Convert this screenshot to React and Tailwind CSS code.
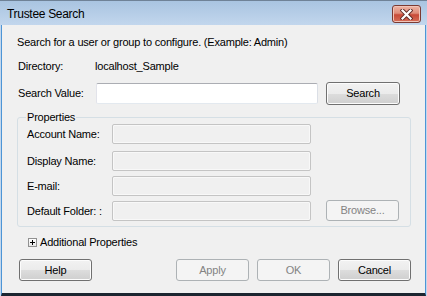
import React from "react";

function Btn({ children, disabled, className = "" }) {
  return (
    <div
      className={
        "flex items-center justify-center rounded-[3px] border text-[11px] leading-none " +
        (disabled
          ? "border-[#adb2b5] bg-[#f4f4f4] text-[#838383] "
          : "border-[#707070] bg-[linear-gradient(#f2f2f2_0%,#ebebeb_50%,#dddddd_50%,#cfcfcf_100%)] text-black shadow-[inset_0_0_0_1px_#fcfcfc] ") +
        className
      }
    >
      {children}
    </div>
  );
}

function DisabledInput({ className = "" }) {
  return (
    <div
      className={
        "rounded-[2px] border border-[#c4c4c4] bg-[#f0f0f0] shadow-[inset_0_0_0_1px_#f8f8f8] " +
        className
      }
    />
  );
}

function PropRow({ label, className = "", children }) {
  return (
    <div className={"flex items-center h-[20px] " + className}>
      <div className="w-[85px] leading-[13px]">{label}</div>
      <DisabledInput className="w-[199px] h-[20px]" />
      {children}
    </div>
  );
}

export default function App() {
  return (
    <div className="w-[427px] h-[296px] flex flex-col bg-[linear-gradient(#a9c4e1,#c3d7ed_25px,#c3d7ed)] border-t border-[#6f8297] font-['Liberation_Sans',Arial,sans-serif] text-[11px] tracking-[-0.2px] text-black overflow-hidden">
      {/* Title bar */}
      <div className="h-[24px] flex items-start pl-[7px] pr-[7px] shrink-0">
        <div className="mt-[6px] text-[12px] leading-[15px] tracking-[-0.3px]">
          Trustee Search
        </div>
        <div className="ml-auto mt-[4px] mr-[-1px] w-[29px] h-[18px] rounded-[3px] border border-[#7b3a32] bg-[linear-gradient(#eeb4a5_0%,#df8c79_45%,#c84a38_55%,#d66e58_100%)] flex items-center justify-center shadow-[inset_0_0_0_1px_#f0c4b8]">
          <svg width="13" height="11" viewBox="0 0 13 11">
            <path d="M2.5 1.5 L10.5 9.5 M10.5 1.5 L2.5 9.5" stroke="#5b2a26" strokeWidth="4" strokeLinecap="square" />
            <path d="M2.5 1.5 L10.5 9.5 M10.5 1.5 L2.5 9.5" stroke="#ffffff" strokeWidth="2.2" strokeLinecap="square" />
          </svg>
        </div>
      </div>

      {/* Client area */}
      <div className="flex-1 flex flex-col ml-[1px] mr-[1px] mb-0 border-l border-r border-b-[3px] border-l-[#4d95d6] border-r-[#4d95d6] border-b-[#1c2530] bg-[#f0f0f0] pl-[15px]">
        <div className="mt-[11px] leading-[13px]">
          Search for a user or group to configure. (Example: Admin)
        </div>

        <div className="mt-[11px] flex leading-[13px]">
          <div className="w-[77px] ml-[1px]">Directory:</div>
          <div>localhost_Sample</div>
        </div>

        <div className="mt-[9px] flex items-center h-[23px]">
          <div className="w-[78px] ml-[1px] leading-[13px]">Search Value:</div>
          <div className="w-[222px] h-[21px] rounded-[2px] border border-[#abadb3] border-l-[#e2e3ea] border-r-[#dbdfe6] border-b-[#e3e9ef] bg-white" />
          <Btn className="ml-[8px] w-[74px] h-[23px]">Search</Btn>
        </div>

        <fieldset className="mt-[6px] w-[394px] rounded-[3px] border border-[#d5dfe5] pl-[9px] pb-[5px]">
          <legend className="ml-[-1px] px-[1px] leading-[13px]">Properties</legend>
          <PropRow label="Account Name:" />
          <PropRow label="Display Name:" className="mt-[7px]" />
          <PropRow label="E-mail:" className="mt-[5px]" />
          <PropRow label="Default Folder: :" className="mt-[5px]">
            <Btn disabled className="ml-[15px] w-[73px] h-[21px] -mt-[1px]">
              Browse...
            </Btn>
          </PropRow>
        </fieldset>

        <div className="mt-[9px] flex items-center h-[13px] ml-[11px]">
          <div className="w-[9px] h-[9px] border border-[#919191] bg-[linear-gradient(#ffffff,#e6e6e6)] flex items-center justify-center">
            <svg width="7" height="7" viewBox="0 0 7 7">
              <path d="M1 3.5 H6 M3.5 1 V6" stroke="#000" strokeWidth="1" />
            </svg>
          </div>
          <div className="ml-[3px] leading-[13px]">Additional Properties</div>
        </div>

        <div className="mt-[10px] flex h-[22px]">
          <Btn className="ml-[2px] w-[73px] h-[22px]">Help</Btn>
          <Btn disabled className="ml-[84px] w-[73px] h-[22px]">Apply</Btn>
          <Btn disabled className="ml-[8px] w-[73px] h-[22px]">OK</Btn>
          <Btn className="ml-[8px] w-[73px] h-[22px]">Cancel</Btn>
        </div>
      </div>
    </div>
  );
}
